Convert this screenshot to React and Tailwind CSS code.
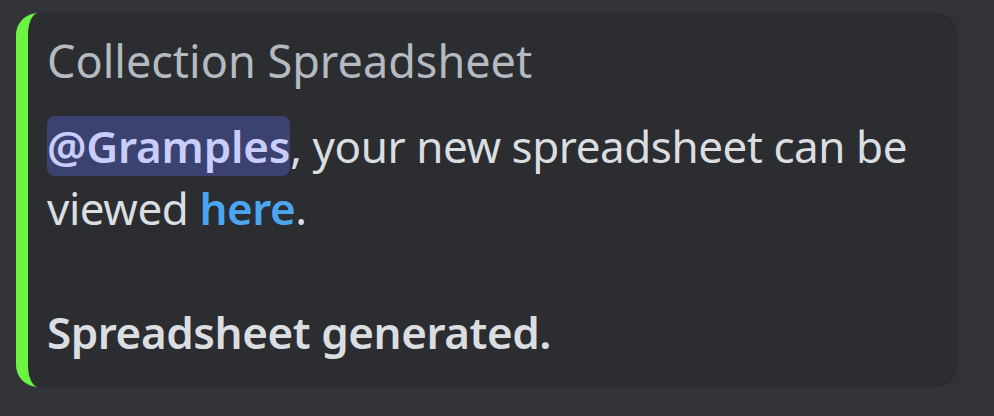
import React from 'react';

const App = () => {
  return (
    <div
      className="w-[994px] h-[416px] bg-[#323338] pl-[16px] pt-[13px]"
      style={{ fontFamily: '"Noto Sans", "Open Sans", sans-serif' }}
    >
      <div className="w-[942px] h-[374px] bg-[#2b2d31] rounded-[22px] border-l-[12px] border-[#6bf542] pl-[19px] pt-[20px]">
        <div className="text-[45px] leading-[56px] text-[#b5bac1]">
          Collection Spreadsheet
        </div>
        <div className="mt-[26px] text-[44px] leading-[62px] text-[#dbdee1] tracking-[-0.45px]">
          <span className="bg-[#3c4270] text-[#c9cdfb] font-semibold rounded-[8px] tracking-[-0.2px]">
            @Gramples
          </span>
          , your new spreadsheet can be
          <br />
          viewed <span className="text-[#4aa6f1] font-semibold">here</span>.
          <br />
          <br />
          <span className="font-semibold">Spreadsheet generated.</span>
        </div>
      </div>
    </div>
  );
};

export default App;
